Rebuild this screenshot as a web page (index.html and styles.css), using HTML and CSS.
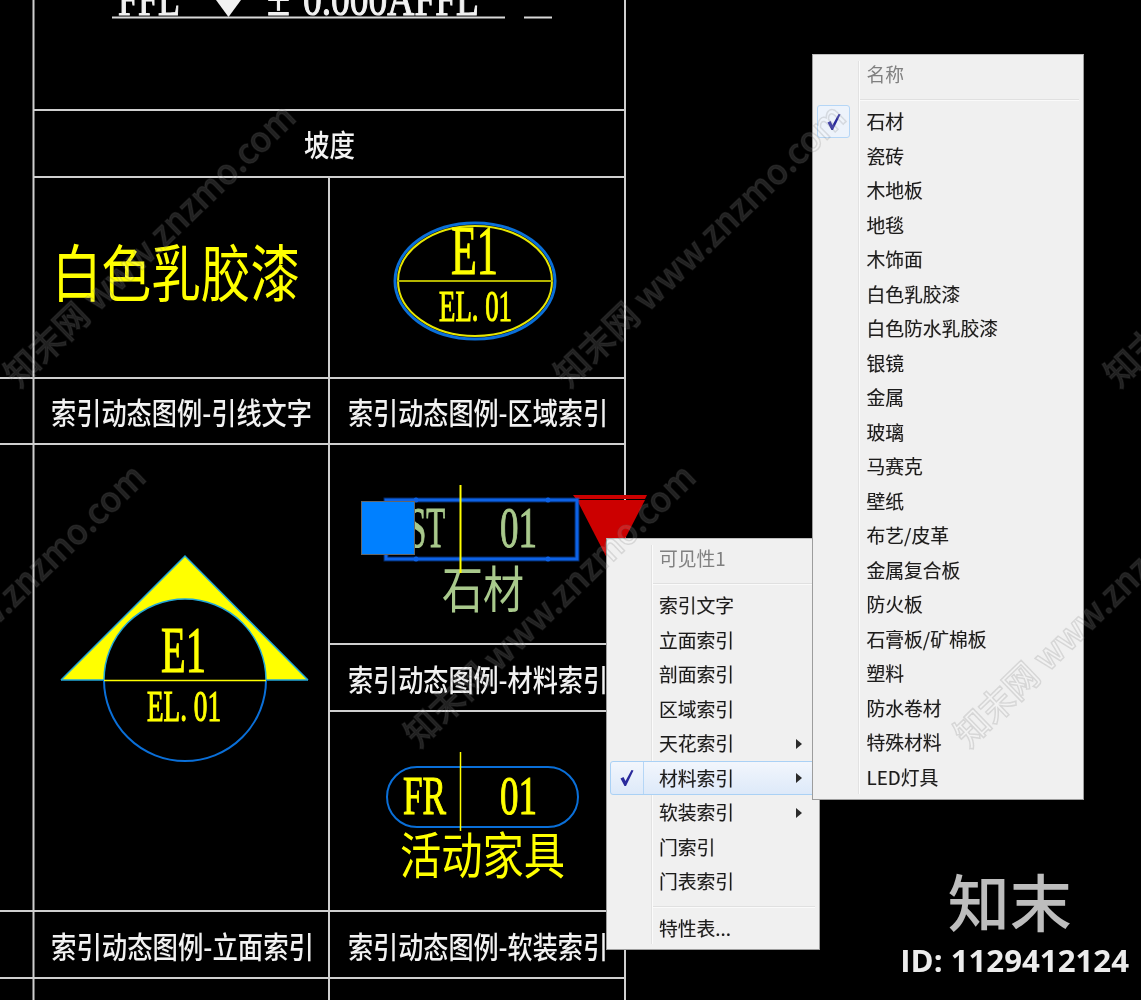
FILE: index.html
```html
<!DOCTYPE html>
<html lang="zh-CN">
<head>
<meta charset="utf-8">
<title>索引动态图例</title>
<link rel="stylesheet" href="styles.css">
</head>
<body>
<main class="canvas">
  <svg class="drawing" viewBox="0 0 1141 1000" width="1141" height="1000">
    <!-- table grid -->
    <g class="grid">
      <path d="M33.5 0V1000M625 0V1000M329 177V1000"/>
      <path d="M33 110H625M33 177H625M0 378H625M0 444H625M329 644H625M329 711H625M0 911H625M0 978H625"/>
    </g>

    <!-- top FFL row -->
    <text class="serif white" x="118" y="15" font-size="46" textLength="62" lengthAdjust="spacingAndGlyphs">FFL</text>
    <polygon class="white-fill" points="216,0 241,0 228.5,17"/>
    <text class="serif white" x="267" y="15" font-size="46" textLength="23" lengthAdjust="spacingAndGlyphs">±</text>
    <text class="serif white" x="303" y="15" font-size="46" textLength="176" lengthAdjust="spacingAndGlyphs">0.000AFFL</text>
    <path class="underline" d="M112 17.5H505M524 17.5H552"/>

    <text class="cjk white" x="304" y="156" font-size="30" textLength="51" lengthAdjust="spacingAndGlyphs">坡度</text>

    <!-- paint label -->
    <text class="cjk yellow" x="52" y="297" font-size="62" textLength="248" lengthAdjust="spacingAndGlyphs">白色乳胶漆</text>

    <!-- area index -->
    <ellipse class="outline-blue" cx="475" cy="281" rx="80" ry="58"/>
    <ellipse class="outline-yellow" cx="475" cy="281" rx="77" ry="55"/>
    <path class="rule-yellow" d="M397 281H553"/>
    <text class="serif yellow" x="451" y="274" font-size="70" textLength="47" lengthAdjust="spacingAndGlyphs">E1</text>
    <text class="serif yellow" x="439" y="321" font-size="44" textLength="73" lengthAdjust="spacingAndGlyphs">EL. 01</text>

    <!-- elevation index -->
    <path class="tri-fill" d="M61 680 L185 556 L308 680 H266 A81 81 0 0 0 104 680 Z"/>
    <path class="tri-edge" d="M61 680 L185 556 L308 680 M104 680 A81 81 0 0 1 266 680"/>
    <path class="tri-edge" d="M61 680H104M266 680H308"/>
    <path class="outline-blue thin" d="M104 680 A81 81 0 0 0 266 680"/>
    <path class="rule-bright" d="M104 680.5H266"/>
    <text class="serif yellow" x="161" y="672" font-size="66" textLength="45" lengthAdjust="spacingAndGlyphs">E1</text>
    <text class="serif yellow" x="147" y="721" font-size="44" textLength="74" lengthAdjust="spacingAndGlyphs">EL. 01</text>

    <!-- material index, selected with grips -->
    <polygon class="red" points="577,500 645,500 611,566"/>
    <polygon class="red" points="573,495 647,495 645,499 576,499"/>
    <rect class="sel-glow" x="386" y="500" width="191" height="59"/>
    <rect class="sel-line" x="386" y="500" width="191" height="59"/>
    <path class="sel-dots" d="M416 500h.01M548 500h.01M416 559h.01M548 559h.01"/>
    <text class="serif sage" x="409" y="547" font-size="58" textLength="36" lengthAdjust="spacingAndGlyphs">ST</text>
    <text class="serif sage" x="500" y="547" font-size="58" textLength="37" lengthAdjust="spacingAndGlyphs">01</text>
    <text class="cjk sage" x="442" y="608" font-size="50" textLength="82" lengthAdjust="spacingAndGlyphs">石材</text>
    <path class="rule-strong" d="M460.5 485V573"/>
    <rect class="grip" x="361.5" y="501.5" width="53" height="53"/>

    <!-- furniture index -->
    <rect class="outline-blue thin" x="387" y="767" width="191" height="60" rx="30" ry="30"/>
    <text class="serif yellow" x="403" y="814" font-size="54" textLength="43" lengthAdjust="spacingAndGlyphs">FR</text>
    <text class="serif yellow" x="500" y="814" font-size="54" textLength="37" lengthAdjust="spacingAndGlyphs">01</text>
    <path class="rule-bright" d="M460.5 752V831"/>
    <text class="cjk yellow" x="400" y="874" font-size="50" textLength="165" lengthAdjust="spacingAndGlyphs">活动家具</text>

    <!-- captions -->
    <text class="cjk white" x="51" y="424" font-size="30" textLength="261" lengthAdjust="spacingAndGlyphs">索引动态图例-引线文字</text>
    <text class="cjk white" x="348" y="424" font-size="30" textLength="260" lengthAdjust="spacingAndGlyphs">索引动态图例-区域索引</text>
    <text class="cjk white" x="348" y="691" font-size="30" textLength="260" lengthAdjust="spacingAndGlyphs">索引动态图例-材料索引</text>
    <text class="cjk white" x="51" y="958" font-size="30" textLength="263" lengthAdjust="spacingAndGlyphs">索引动态图例-立面索引</text>
    <text class="cjk white" x="348" y="958" font-size="30" textLength="260" lengthAdjust="spacingAndGlyphs">索引动态图例-软装索引</text>
  </svg>

  <nav class="menu menu-visibility">
    <div class="row muted"><span class="gutter"></span><span class="label">可见性1</span></div>
    <div class="sep"></div>
    <div class="row"><span class="gutter"></span><span class="label">索引文字</span></div>
    <div class="row"><span class="gutter"></span><span class="label">立面索引</span></div>
    <div class="row"><span class="gutter"></span><span class="label">剖面索引</span></div>
    <div class="row"><span class="gutter"></span><span class="label">区域索引</span></div>
    <div class="row"><span class="gutter"></span><span class="label">天花索引</span><i class="arrow"></i></div>
    <div class="row hot">
      <span class="gutter"><span class="check-box">
        <svg class="tick" viewBox="0 0 16 18" width="16" height="18"><path d="M1.5 9.5 L4.5 8 L6.5 12 L12.5 1 L14.5 1.5 L7 17 L5.5 17 Z"/></svg>
      </span></span>
      <span class="label">材料索引</span><i class="arrow"></i>
    </div>
    <div class="row"><span class="gutter"></span><span class="label">软装索引</span><i class="arrow"></i></div>
    <div class="row"><span class="gutter"></span><span class="label">门索引</span></div>
    <div class="row"><span class="gutter"></span><span class="label">门表索引</span></div>
    <div class="sep"></div>
    <div class="row"><span class="gutter"></span><span class="label">特性表...</span></div>
  </nav>

  <nav class="menu menu-material">
    <div class="row muted"><span class="gutter"></span><span class="label">名称</span></div>
    <div class="sep"></div>
    <div class="row">
      <span class="gutter"><span class="check-box">
        <svg class="tick" viewBox="0 0 16 18" width="16" height="18"><path d="M1.5 9.5 L4.5 8 L6.5 12 L12.5 1 L14.5 1.5 L7 17 L5.5 17 Z"/></svg>
      </span></span>
      <span class="label">石材</span>
    </div>
    <div class="row"><span class="gutter"></span><span class="label">瓷砖</span></div>
    <div class="row"><span class="gutter"></span><span class="label">木地板</span></div>
    <div class="row"><span class="gutter"></span><span class="label">地毯</span></div>
    <div class="row"><span class="gutter"></span><span class="label">木饰面</span></div>
    <div class="row"><span class="gutter"></span><span class="label">白色乳胶漆</span></div>
    <div class="row"><span class="gutter"></span><span class="label">白色防水乳胶漆</span></div>
    <div class="row"><span class="gutter"></span><span class="label">银镜</span></div>
    <div class="row"><span class="gutter"></span><span class="label">金属</span></div>
    <div class="row"><span class="gutter"></span><span class="label">玻璃</span></div>
    <div class="row"><span class="gutter"></span><span class="label">马赛克</span></div>
    <div class="row"><span class="gutter"></span><span class="label">壁纸</span></div>
    <div class="row"><span class="gutter"></span><span class="label">布艺/皮革</span></div>
    <div class="row"><span class="gutter"></span><span class="label">金属复合板</span></div>
    <div class="row"><span class="gutter"></span><span class="label">防火板</span></div>
    <div class="row"><span class="gutter"></span><span class="label">石膏板/矿棉板</span></div>
    <div class="row"><span class="gutter"></span><span class="label">塑料</span></div>
    <div class="row"><span class="gutter"></span><span class="label">防水卷材</span></div>
    <div class="row"><span class="gutter"></span><span class="label">特殊材料</span></div>
    <div class="row"><span class="gutter"></span><span class="label">LED灯具</span></div>
  </nav>

  <svg class="watermark" viewBox="0 0 1141 1000" width="1141" height="1000">
    <g id="marks" class="marks">
      <text transform="translate(19 389) rotate(-44)" textLength="388" lengthAdjust="spacingAndGlyphs">知末网 www.znzmo.com</text>
      <text transform="translate(569 389) rotate(-44)" textLength="388" lengthAdjust="spacingAndGlyphs">知末网 www.znzmo.com</text>
      <text transform="translate(1119 389) rotate(-44)" textLength="388" lengthAdjust="spacingAndGlyphs">知末网 www.znzmo.com</text>
      <text transform="translate(-131 749) rotate(-44)" textLength="388" lengthAdjust="spacingAndGlyphs">知末网 www.znzmo.com</text>
      <text transform="translate(419 749) rotate(-44)" textLength="388" lengthAdjust="spacingAndGlyphs">知末网 www.znzmo.com</text>
      <text transform="translate(969 749) rotate(-44)" textLength="388" lengthAdjust="spacingAndGlyphs">知末网 www.znzmo.com</text>
    </g>
  </svg>
  <svg class="watermark watermark-edge" viewBox="0 0 1141 1000" width="1141" height="1000">
    <use href="#marks" class="marks-edge"/>
  </svg>

  <aside class="brand">
    <div class="brand-name">知末</div>
    <div class="brand-id">ID: 1129412124</div>
  </aside>
</main>
</body>
</html>
```

FILE: styles.css
```css
* { box-sizing: border-box; }

html, body {
  margin: 0;
  padding: 0;
  background: #000;
}

.canvas {
  position: relative;
  width: 1141px;
  height: 1000px;
  overflow: hidden;
  background: #000;
  font-family: "Noto Sans CJK SC", "Noto Sans", sans-serif;
}

.drawing,
.watermark {
  position: absolute;
  left: 0;
  top: 0;
  display: block;
}

.watermark {
  pointer-events: none;
  z-index: 5;
}

.watermark text {
  font-family: "Noto Sans CJK SC", "Open Sans", sans-serif;
  font-size: 35px;
  font-weight: 500;
}

.marks {
  fill: rgba(255, 255, 255, 0.13);
  stroke: rgba(140, 140, 140, 0.12);
  stroke-width: 1.5px;
}

.watermark-edge {
  mix-blend-mode: multiply;
  z-index: 6;
}

.marks-edge {
  fill: #f8f8f8;
  stroke: #dcdcdc;
  stroke-width: 2px;
}

/* drawing */
.grid path {
  fill: none;
  stroke: #cfcfcf;
  stroke-width: 2px;
}

.underline {
  fill: none;
  stroke: #d8d8d8;
  stroke-width: 2px;
}

.serif {
  font-family: "Liberation Serif", serif;
  font-weight: 400;
  stroke-width: 1.1px;
}

.cjk {
  font-family: "Noto Sans CJK SC", sans-serif;
  font-weight: 400;
}

.cjk.white { font-weight: 500; }

.white { fill: #f2f2f2; }
.white-fill { fill: #f2f2f2; }
.yellow { fill: #ffff00; }
.sage { fill: #a9c98c; }
.red { fill: #cc0000; }

.serif.white { stroke: #f2f2f2; }
.serif.yellow { stroke: #ffff00; }
.serif.sage { stroke: #a9c98c; }

.outline-blue {
  fill: none;
  stroke: #0a6fd8;
  stroke-width: 3px;
}

.outline-blue.thin { stroke-width: 2px; }

.outline-yellow {
  fill: none;
  stroke: #e6e600;
  stroke-width: 2px;
}

.rule-yellow {
  fill: none;
  stroke: #b4b400;
  stroke-width: 2px;
}

.rule-bright {
  fill: none;
  stroke: #ffff00;
  stroke-width: 1.5px;
}

.rule-strong {
  fill: none;
  stroke: #ffff00;
  stroke-width: 2px;
}

.tri-fill { fill: #ffff00; }

.tri-edge {
  fill: none;
  stroke: #22a8d8;
  stroke-width: 1.5px;
}

.sel-glow {
  fill: none;
  stroke: rgba(10, 90, 220, 0.45);
  stroke-width: 5px;
}

.sel-line {
  fill: none;
  stroke: #0d62e6;
  stroke-width: 3px;
}

.sel-dots {
  fill: none;
  stroke: #0d62e6;
  stroke-width: 5px;
  stroke-linecap: round;
}

.grip {
  fill: #0080ff;
  stroke: #666;
  stroke-width: 1px;
}

/* context menus */
.menu {
  position: absolute;
  display: flex;
  flex-direction: column;
  background: #f0f0f0;
  border: 1px solid #9d9d9d;
  border-top-color: #bdbdbd;
  color: #1c1c1c;
  font-size: 18.8px;
}

.menu::before {
  content: "";
  position: absolute;
  top: 6px;
  bottom: 5px;
  width: 2px;
  background: linear-gradient(to right, #e2e2e2 50%, #fbfbfb 50%);
}

.menu-visibility {
  left: 606px;
  top: 538px;
  width: 214px;
  height: 412px;
  padding-top: 2.25px;
  z-index: 1;
}

.menu-visibility::before { left: 44px; }

.menu-material {
  left: 812px;
  top: 54px;
  width: 272px;
  height: 746px;
  padding-top: 2.5px;
  z-index: 2;
}

.menu-material::before { left: 45px; }

.row {
  position: relative;
  z-index: 1;
  display: flex;
  flex: none;
  align-items: center;
  height: 34.5px;
  line-height: 1;
}

.gutter {
  display: flex;
  flex: none;
  align-items: center;
  width: 52px;
  height: 100%;
}

.menu-material .gutter { width: 53.5px; }

.label {
  white-space: nowrap;
  filter: blur(0.35px);
  text-shadow: -0.5px 0 rgba(230, 130, 0, 0.3), 0.5px 0 rgba(0, 90, 230, 0.3);
}

.muted .label {
  color: #808080;
  text-shadow: none;
}

.sep {
  flex: none;
  height: 12.5px;
  margin: 0 4px 0 46px;
  padding-top: 7px;
}

.sep::after {
  content: "";
  display: block;
  height: 2px;
  background: linear-gradient(to bottom, #e0e0e0 50%, #fafafa 50%);
}

.check-box {
  display: flex;
  align-items: center;
  justify-content: center;
  width: 33px;
  height: 33px;
  margin-left: 4px;
  background: #edf3fb;
  border: 1px solid #b5d6f6;
  border-radius: 3px;
}

.tick path { fill: #2a2a9c; }

.row.hot {
  margin: 0 3px;
  background: linear-gradient(to bottom, #f2f6fc, #dde9f9);
  border: 1px solid #aad1f5;
  border-radius: 3px;
}

.row.hot .gutter { width: 48px; }

.row.hot .check-box {
  width: 33px;
  height: 100%;
  margin-left: 0;
  background: transparent;
  border: 0;
  border-right: 1px solid #b5d6f6;
  border-radius: 0;
}

.arrow {
  width: 0;
  height: 0;
  margin-left: auto;
  margin-right: 17px;
  border-top: 5.5px solid transparent;
  border-bottom: 5.5px solid transparent;
  border-left: 6px solid #2b2b2b;
}

.row.hot .arrow { margin-right: 13px; }

/* brand stamp */
.brand {
  position: absolute;
  right: 12px;
  top: 867px;
  z-index: 7;
  display: flex;
  flex-direction: column;
  align-items: center;
}

.brand-name {
  margin-right: 10px;
  font-size: 62px;
  font-weight: 500;
  line-height: 66px;
  color: #bdbdbd;
}

.brand-id {
  margin-top: 7px;
  font-family: "Open Sans", sans-serif;
  font-size: 31.2px;
  font-weight: 700;
  line-height: 40px;
  color: #ececec;
  white-space: nowrap;
}
```
